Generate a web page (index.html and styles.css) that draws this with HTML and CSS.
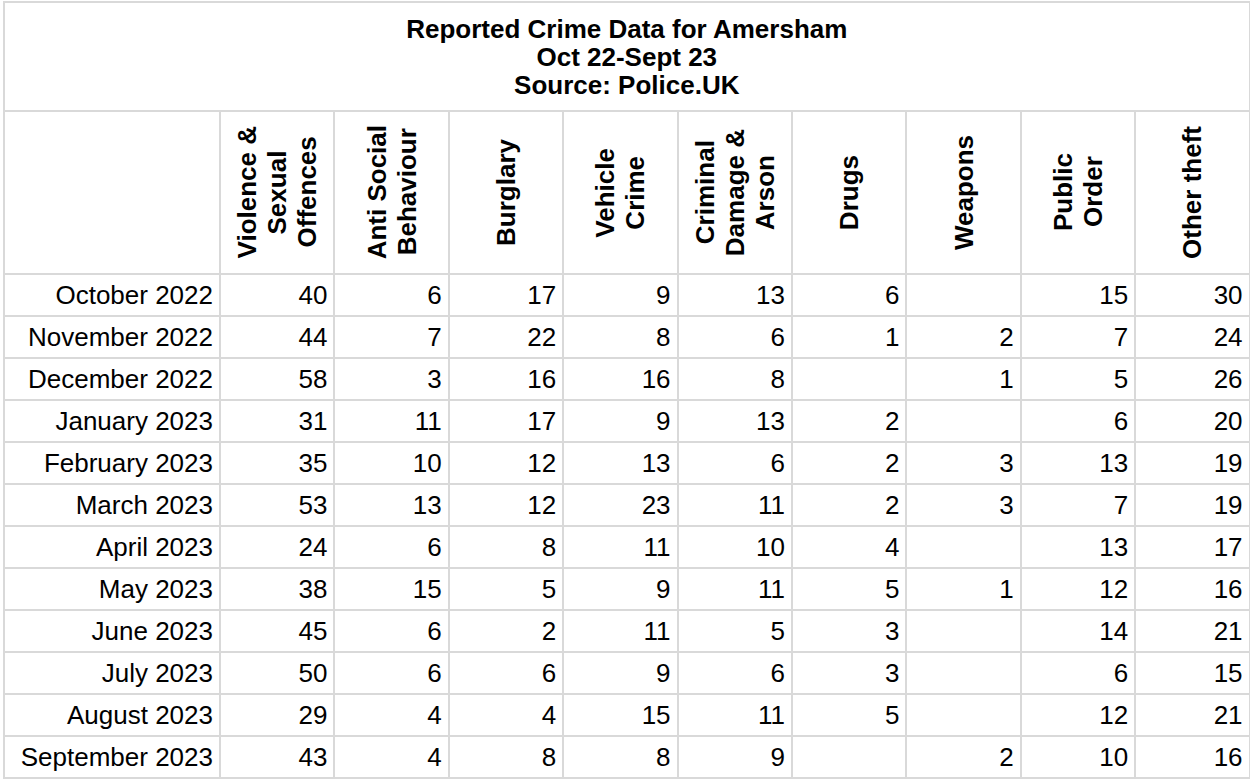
FILE: index.html
```html
<!DOCTYPE html>
<html lang="en">
<head>
<meta charset="utf-8">
<title>Reported Crime Data for Amersham</title>
<link rel="stylesheet" href="styles.css">
</head>
<body>
<table class="crime">
  <colgroup>
    <col class="c-label">
    <col class="c-num"><col class="c-num"><col class="c-num"><col class="c-num"><col class="c-num">
    <col class="c-num"><col class="c-num"><col class="c-num"><col class="c-num">
  </colgroup>
  <thead>
    <tr class="title-row">
      <th colspan="10" class="title">Reported Crime Data for Amersham<br>Oct 22-Sept 23<br>Source: Police.UK</th>
    </tr>
    <tr class="head-row">
      <th></th>
      <th><div class="vt">Violence &amp;<br>Sexual<br>Offences</div></th>
      <th><div class="vt">Anti Social<br>Behaviour</div></th>
      <th><div class="vt">Burglary</div></th>
      <th><div class="vt">Vehicle<br>Crime</div></th>
      <th><div class="vt">Criminal<br>Damage &amp;<br>Arson</div></th>
      <th><div class="vt">Drugs</div></th>
      <th><div class="vt">Weapons</div></th>
      <th><div class="vt">Public<br>Order</div></th>
      <th><div class="vt">Other theft</div></th>
    </tr>
  </thead>
  <tbody>
    <tr><td>October 2022</td><td>40</td><td>6</td><td>17</td><td>9</td><td>13</td><td>6</td><td></td><td>15</td><td>30</td></tr>
    <tr><td>November 2022</td><td>44</td><td>7</td><td>22</td><td>8</td><td>6</td><td>1</td><td>2</td><td>7</td><td>24</td></tr>
    <tr><td>December 2022</td><td>58</td><td>3</td><td>16</td><td>16</td><td>8</td><td></td><td>1</td><td>5</td><td>26</td></tr>
    <tr><td>January 2023</td><td>31</td><td>11</td><td>17</td><td>9</td><td>13</td><td>2</td><td></td><td>6</td><td>20</td></tr>
    <tr><td>February 2023</td><td>35</td><td>10</td><td>12</td><td>13</td><td>6</td><td>2</td><td>3</td><td>13</td><td>19</td></tr>
    <tr><td>March 2023</td><td>53</td><td>13</td><td>12</td><td>23</td><td>11</td><td>2</td><td>3</td><td>7</td><td>19</td></tr>
    <tr><td>April 2023</td><td>24</td><td>6</td><td>8</td><td>11</td><td>10</td><td>4</td><td></td><td>13</td><td>17</td></tr>
    <tr><td>May 2023</td><td>38</td><td>15</td><td>5</td><td>9</td><td>11</td><td>5</td><td>1</td><td>12</td><td>16</td></tr>
    <tr><td>June 2023</td><td>45</td><td>6</td><td>2</td><td>11</td><td>5</td><td>3</td><td></td><td>14</td><td>21</td></tr>
    <tr><td>July 2023</td><td>50</td><td>6</td><td>6</td><td>9</td><td>6</td><td>3</td><td></td><td>6</td><td>15</td></tr>
    <tr><td>August 2023</td><td>29</td><td>4</td><td>4</td><td>15</td><td>11</td><td>5</td><td></td><td>12</td><td>21</td></tr>
    <tr><td>September 2023</td><td>43</td><td>4</td><td>8</td><td>8</td><td>9</td><td></td><td>2</td><td>10</td><td>16</td></tr>
  </tbody>
</table>
</body>
</html>
```
FILE: styles.css
```css
html, body {
  margin: 0;
  padding: 0;
  background: #ffffff;
}

body {
  padding: 1px 0 0 3px;
  font-family: "Liberation Sans", Arial, sans-serif;
  color: #000000;
}

.crime {
  border-collapse: collapse;
  table-layout: fixed;
  width: 1246px;
  font-size: 26px;
}

.c-label { width: 216px; }
.c-num { width: 114.4px; }

.crime th,
.crime td {
  border: 2px solid #d9d9d9;
  padding: 0;
}

.title {
  height: 107px;
  text-align: center;
  vertical-align: middle;
  font-weight: bold;
  line-height: 28px;
}

.head-row th {
  height: 161px;
  text-align: center;
  vertical-align: middle;
  font-weight: bold;
  font-size: 0;
  line-height: 0;
}

.vt {
  display: inline-block;
  vertical-align: middle;
  writing-mode: vertical-rl;
  transform: rotate(180deg);
  text-align: center;
  font-size: 26px;
  line-height: 30px;
  white-space: nowrap;
}

.crime tbody td {
  height: 40px;
  text-align: right;
  vertical-align: middle;
  padding-right: 6px;
  line-height: 30px;
  white-space: nowrap;
}
```
